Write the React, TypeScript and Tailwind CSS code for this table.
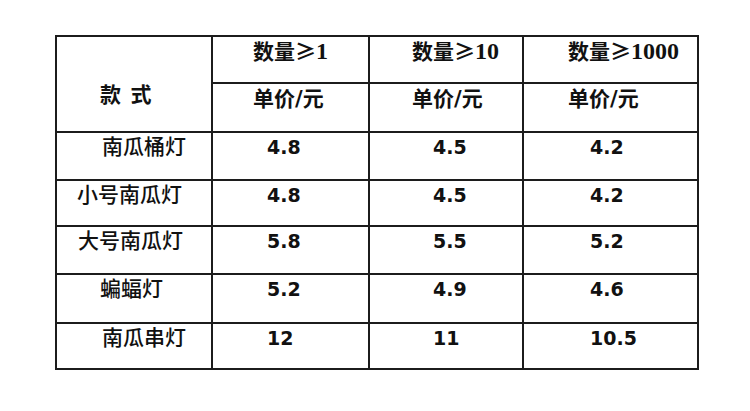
const cjk = "font-['Noto_Sans_CJK_SC',sans-serif]";
const num = "font-['DejaVu_Sans',sans-serif]";

const tiers = [
  { qty: "1", pad: "pl-[40px]" },
  { qty: "10", pad: "pl-[42px]" },
  { qty: "1000", pad: "pl-[44px]" },
];

const numPads = ["pl-[54px]", "pl-[63px]", "pl-[66px]"];

const rows = [
  { name: "南瓜桶灯", pad: "pl-[45px]", h: "h-[48px]", prices: ["4.8", "4.5", "4.2"] },
  { name: "小号南瓜灯", pad: "pl-[20px]", h: "h-[46px]", prices: ["4.8", "4.5", "4.2"] },
  { name: "大号南瓜灯", pad: "pl-[21px]", h: "h-[48px]", prices: ["5.8", "5.5", "5.2"] },
  { name: "蝙蝠灯", pad: "pl-[43px]", h: "h-[49px]", prices: ["5.2", "4.9", "4.6"] },
  { name: "南瓜串灯", pad: "pl-[45px]", h: "h-[46px]", prices: ["12", "11", "10.5"] },
];

const cell = "border-2 border-[#1c1c1c] p-0 align-top text-left";

export default function App() {
  return (
    <div className="w-[750px] h-[411px] bg-white pt-[35px] pl-[55px]">
      <table className="border-collapse text-[#111]">
        <colgroup>
          <col className="w-[156px]" />
          <col className="w-[157px]" />
          <col className="w-[154px]" />
          <col className="w-[175px]" />
        </colgroup>
        <tbody>
          <tr className="h-[47px]">
            <td rowSpan={2} className={cell}>
              <div className={`${cjk} text-[21px] leading-none font-bold pl-[43px] pt-[46px] whitespace-pre`}>
                款  式
              </div>
            </td>
            {tiers.map((t) => (
              <td key={t.qty} className={cell}>
                <div className={`${t.pad} pt-[2px] leading-none font-bold whitespace-nowrap flex items-baseline`}>
                  <span className={`${cjk} text-[21px]`}>数量≥</span>
                  <span className="font-['Liberation_Serif',serif] text-[24px]">{t.qty}</span>
                </div>
              </td>
            ))}
          </tr>
          <tr className="h-[49px]">
            {tiers.map((t) => (
              <td key={t.qty} className={cell}>
                <div className={`${t.pad} pt-[5px] text-[21px] leading-none font-bold whitespace-nowrap font-['DejaVu_Sans','Noto_Sans_CJK_SC',sans-serif]`}>
                  单价/元
                </div>
              </td>
            ))}
          </tr>
          {rows.map((r) => (
            <tr key={r.name} className={r.h}>
              <td className={cell}>
                <div className={`${cjk} ${r.pad} pt-[2px] text-[21px] leading-none font-medium whitespace-nowrap`}>
                  {r.name}
                </div>
              </td>
              {r.prices.map((p, i) => (
                <td key={i} className={cell}>
                  <div className={`${num} ${numPads[i]} pt-[5px] text-[19px] leading-none font-bold`}>
                    {p}
                  </div>
                </td>
              ))}
            </tr>
          ))}
        </tbody>
      </table>
    </div>
  );
}
